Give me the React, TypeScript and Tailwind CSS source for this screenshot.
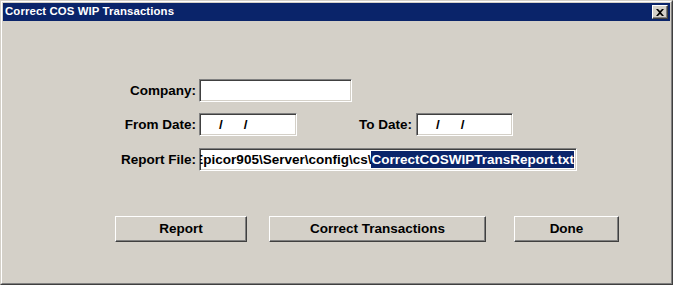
import React from 'react';

const sunken =
  'border border-t-[#808080] border-l-[#808080] border-r-white border-b-white bg-white shadow-[inset_1px_1px_#404040,inset_-1px_-1px_#d4d0c8]';
const raised =
  'border border-t-white border-l-white border-r-[#404040] border-b-[#404040] bg-[#d4d0c8] shadow-[inset_-1px_-1px_#808080]';

const DateBox: React.FC<{ className?: string }> = ({ className }) => (
  <div className={`${sunken} h-[23px] flex items-center ${className ?? ''}`}>
    <span className="ml-[19px]">/</span>
    <span className="ml-[21px]">/</span>
  </div>
);

const Button: React.FC<{ label: string; className?: string }> = ({ label, className }) => (
  <button className={`${raised} h-[26px] flex items-center justify-center ${className ?? ''}`}>
    {label}
  </button>
);

export default function App() {
  return (
    <div
      className="w-[673px] h-[285px] border border-t-[#d4d0c8] border-l-[#d4d0c8] border-r-[#404040] border-b-[#404040] bg-[#d4d0c8] text-black font-bold text-[13.5px] leading-none"
      style={{ fontFamily: '"Liberation Sans", Arial, sans-serif' }}
    >
      <div className="h-full border border-t-white border-l-white border-r-[#808080] border-b-[#808080] p-px flex flex-col">
        {/* title bar */}
        <div className="h-[18px] bg-[#0a246a] flex items-center justify-between pl-[2px] pr-[2px]">
          <span className="text-white text-[11.4px] tracking-[0.1px]">Correct COS WIP Transactions</span>
          <div className={`${raised} w-[16px] h-[14px] flex items-center justify-center`}>
            <svg width="8" height="7" viewBox="0 0 8 7">
              <path d="M0 0h2l2 2 2-2h2L5 3.5 8 7H6L4 5 2 7H0l3-3.5z" fill="#000" />
            </svg>
          </div>
        </div>

        {/* body */}
        <div className="flex-1 pl-[97px] pt-[58px]">
          <div className="flex items-center h-[23px]">
            <label className="w-[96px] text-right">Company:</label>
            <div className={`${sunken} ml-[3px] w-[153px] h-[23px]`} />
          </div>

          <div className="flex items-center h-[23px] mt-[11px]">
            <label className="w-[96px] text-right">From Date:</label>
            <DateBox className="ml-[3px] w-[98px]" />
            <label className="w-[115px] text-right">To Date:</label>
            <DateBox className="ml-[4px] w-[97px]" />
          </div>

          <div className="flex items-center h-[23px] mt-[12px]">
            <label className="w-[96px] text-right">Report File:</label>
            <div className={`${sunken} ml-[3px] w-[378px] h-[23px] overflow-hidden flex items-center justify-end pr-[2px]`}>
              <span className="shrink-0 whitespace-nowrap">E:\Epicor905\Server\config\cs\</span>
              <span className="shrink-0 whitespace-nowrap bg-[#0a246a] text-white h-[17px] flex items-center">
                CorrectCOSWIPTransReport.txt
              </span>
            </div>
          </div>

          <div className="flex mt-[45px] ml-[15px]">
            <Button label="Report" className="w-[132px]" />
            <Button label="Correct Transactions" className="ml-[22px] w-[217px]" />
            <Button label="Done" className="ml-[28px] w-[105px]" />
          </div>
        </div>
      </div>
    </div>
  );
}
